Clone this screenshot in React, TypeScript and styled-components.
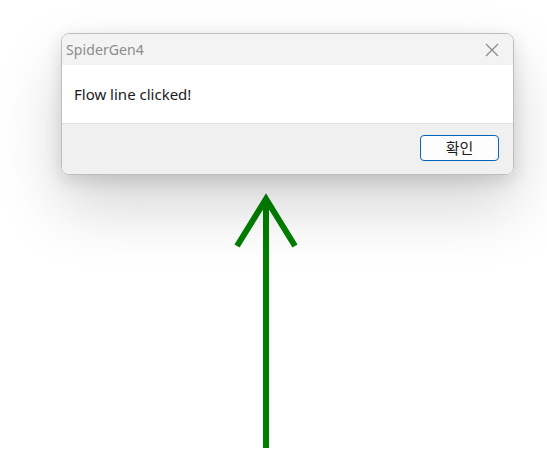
import React from "react";
import styled, { createGlobalStyle } from "styled-components";

const GlobalStyle = createGlobalStyle`
  html, body {
    margin: 0;
    padding: 0;
    background: #ffffff;
  }
  body {
    font-family: "Noto Sans", "Noto Sans CJK KR", sans-serif;
  }
`;

const Canvas = styled.div`
  position: relative;
  width: 547px;
  height: 469px;
  overflow: hidden;
  background: #ffffff;
`;

const Drawing = styled.svg`
  display: block;
`;

const Dialog = styled.div`
  position: absolute;
  left: 61px;
  top: 33px;
  width: 453px;
  height: 142px;
  box-sizing: border-box;
  border: 1px solid #bdbdbd;
  border-radius: 8px;
  overflow: hidden;
  display: flex;
  flex-direction: column;
  box-shadow: 0 32px 64px rgba(0, 0, 0, 0.17), 0 6px 18px rgba(0, 0, 0, 0.13);
`;

const TitleBar = styled.div`
  height: 31px;
  flex: none;
  background: #f3f3f3;
  display: flex;
  align-items: center;
  justify-content: space-between;
  padding: 0 14px 0 4px;
`;

const Title = styled.span`
  font-size: 14px;
  color: #8b8b8b;
  letter-spacing: 0.1px;
`;

const CloseButton = styled.button`
  border: 0;
  background: transparent;
  padding: 0;
  width: 14px;
  height: 14px;
  display: flex;
  align-items: center;
  justify-content: center;
`;

const Body = styled.div`
  height: 59px;
  flex: none;
  background: #ffffff;
  border-bottom: 1px solid #dfdfdf;
  display: flex;
  align-items: center;
  padding: 0 12px 1px;
  box-sizing: border-box;
`;

const Message = styled.span`
  font-size: 15px;
  color: #1a1a1a;
`;

const Footer = styled.div`
  flex: 1;
  background: #f0f0f0;
  display: flex;
  align-items: flex-start;
  justify-content: flex-end;
  padding: 11px 14px 0 0;
`;

const OkButton = styled.button`
  width: 79px;
  height: 26px;
  box-sizing: border-box;
  border: 1px solid #0067c0;
  border-radius: 4px;
  background: #fdfdfd;
  font-family: "Noto Sans CJK KR", sans-serif;
  font-size: 15px;
  color: #1a1a1a;
  padding: 0;
  line-height: 22px;
`;

export default function App() {
  return (
    <>
      <GlobalStyle />
      <Canvas>
        <Drawing width="547" height="469" viewBox="0 0 547 469">
          <g stroke="#008000" strokeWidth="6" fill="none">
            <line x1="266" y1="448" x2="266" y2="200" />
            <polyline points="237,246 266,199 295,246" strokeLinejoin="miter" />
          </g>
        </Drawing>
        <Dialog>
          <TitleBar>
            <Title>SpiderGen4</Title>
            <CloseButton aria-label="close">
              <svg width="14" height="14" viewBox="0 0 14 14">
                <path d="M1 1 L13 13 M13 1 L1 13" stroke="#8a8a8a" strokeWidth="1.2" />
              </svg>
            </CloseButton>
          </TitleBar>
          <Body>
            <Message>Flow line clicked!</Message>
          </Body>
          <Footer>
            <OkButton>확인</OkButton>
          </Footer>
        </Dialog>
      </Canvas>
    </>
  );
}
